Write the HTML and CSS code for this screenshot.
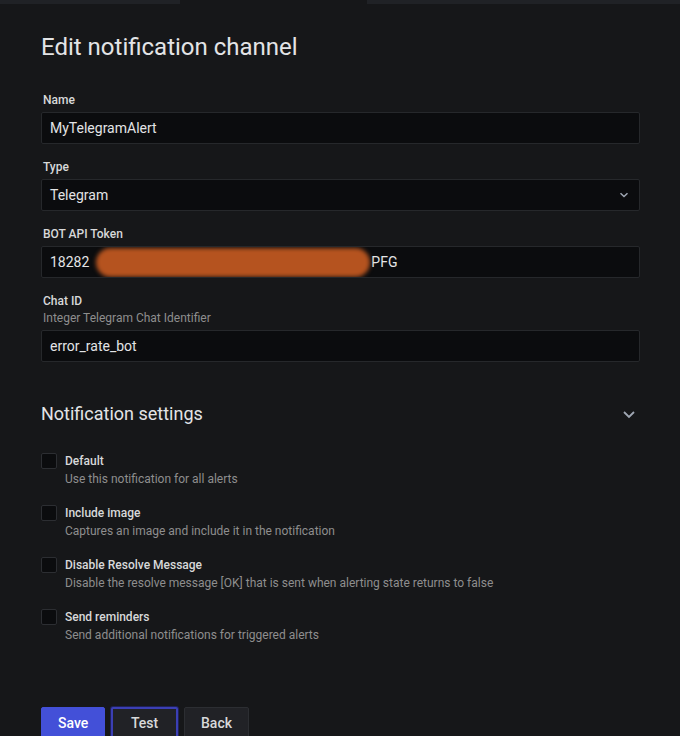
FILE: index.html
```html
<!DOCTYPE html>
<html>
<head>
<meta charset="utf-8">
<link rel="stylesheet" href="styles.css">
</head>
<body>
<div class="tabs"><div class="tab"></div><div class="tab active"></div><div class="tab grow"></div></div>
<main class="page">
  <h1 class="title">Edit notification channel</h1>

  <div class="field">
    <label class="label">Name</label>
    <div class="input">MyTelegramAlert</div>
  </div>

  <div class="field">
    <label class="label">Type</label>
    <div class="input select">
      <span>Telegram</span>
      <svg class="caret" width="10" height="6" viewBox="0 0 10 6"><path d="M1.5 1.2 L5 4.5 L8.5 1.2" fill="none" stroke="#9fa7b3" stroke-width="1.5"/></svg>
    </div>
  </div>

  <div class="field">
    <label class="label">BOT API Token</label>
    <div class="input token">
      <span>18282</span><span class="hidden-part"></span><span>PFG</span>
      <div class="blob"></div>
    </div>
  </div>

  <div class="field">
    <label class="label with-desc">Chat ID</label>
    <div class="desc-line">Integer Telegram Chat Identifier</div>
    <div class="input">error_rate_bot</div>
  </div>

  <div class="section-head">
    <h2 class="section-title">Notification settings</h2>
    <svg class="chev" width="14" height="9" viewBox="0 0 14 9"><path d="M2 2 L7 7 L12 2" fill="none" stroke="#9fa7b3" stroke-width="1.8"/></svg>
  </div>

  <div class="checks">
    <div class="check">
      <span class="box"></span>
      <div class="check-text"><div class="check-label">Default</div><div class="check-desc">Use this notification for all alerts</div></div>
    </div>
    <div class="check">
      <span class="box"></span>
      <div class="check-text"><div class="check-label">Include image</div><div class="check-desc">Captures an image and include it in the notification</div></div>
    </div>
    <div class="check">
      <span class="box"></span>
      <div class="check-text"><div class="check-label">Disable Resolve Message</div><div class="check-desc">Disable the resolve message [OK] that is sent when alerting state returns to false</div></div>
    </div>
    <div class="check">
      <span class="box"></span>
      <div class="check-text"><div class="check-label">Send reminders</div><div class="check-desc">Send additional notifications for triggered alerts</div></div>
    </div>
  </div>

  <div class="buttons">
    <button class="btn primary">Save</button>
    <button class="btn secondary focus">Test</button>
    <button class="btn secondary">Back</button>
  </div>
</main>
</body>
</html>
```

FILE: styles.css
```css
* { box-sizing: border-box; }
html, body { margin: 0; padding: 0; background: #161719; overflow: hidden; }
body { font-family: Roboto, "Noto Sans", sans-serif; color: #d8d9da; width: 680px; height: 736px; }

.tabs { display: flex; height: 4px; }
.tab { width: 180px; background: #202226; }
.tab.active { width: 187px; background: #161719; }
.tab.grow { flex: 1; }

.page { padding: 0 40px 0 41px; }

.title { margin: 29px 0 31px; font-size: 24px; line-height: 28px; font-weight: 400; color: #e3e4e6; }

.field { margin-bottom: 15px; }
.label { display: block; font-size: 12px; line-height: 16px; font-weight: 500; color: #d8d9da; margin-bottom: 4px; padding-left: 2px; }
.label.with-desc { margin-bottom: 0; }
.desc-line { font-size: 12px; line-height: 16px; color: #8e8e8e; margin-top: 1px; margin-bottom: 4px; padding-left: 2px; }

.input { position: relative; height: 32px; background: #0b0c0e; border: 1px solid #26282b; border-radius: 2px; padding: 0 8px; font-size: 14px; line-height: 30px; color: #e3e4e6; display: flex; align-items: center; }
.select { justify-content: space-between; padding-right: 10px; }
.caret { display: block; }

.token { overflow: hidden; }
.hidden-part { display: inline-block; width: 282px; }
.blob { position: absolute; left: 54px; top: 1px; width: 274px; height: 29px; background: #b5531f; border-radius: 15px; filter: blur(2px); }

.section-head { display: flex; justify-content: space-between; align-items: center; margin-top: 40px; padding-right: 4px; }
.section-title { margin: 0; font-size: 18px; line-height: 24px; font-weight: 400; color: #e3e4e6; }
.chev { display: block; }

.checks { margin-top: 27px; display: flex; flex-direction: column; gap: 18px; }
.check { display: flex; align-items: flex-start; gap: 8px; }
.box { width: 16px; height: 16px; flex: none; background: #0b0c0e; border: 1px solid #2c2e32; border-radius: 2px; }
.check-text { font-size: 12px; line-height: 16px; }
.check-label { font-weight: 500; color: #d8d9da; }
.check-desc { color: #8e8e8e; margin-top: 2px; }

.buttons { display: flex; gap: 6px; margin-top: 64px; }
.btn { font-family: Roboto, "Noto Sans", sans-serif; font-size: 14px; font-weight: 500; height: 32px; padding: 0 16px; border-radius: 2px; color: #e3e4e6; cursor: pointer; }
.primary { background: #4350d8; border: 1px solid #4350d8; color: #fff; width: 64px; }
.secondary { background: #212226; border: 1px solid #2c2e32; color: #d8d9da; width: 65px; }
.focus { border: 2px solid #3b3fb4; box-shadow: 0 0 0 1px #1f2157; width: 67px; }
```
